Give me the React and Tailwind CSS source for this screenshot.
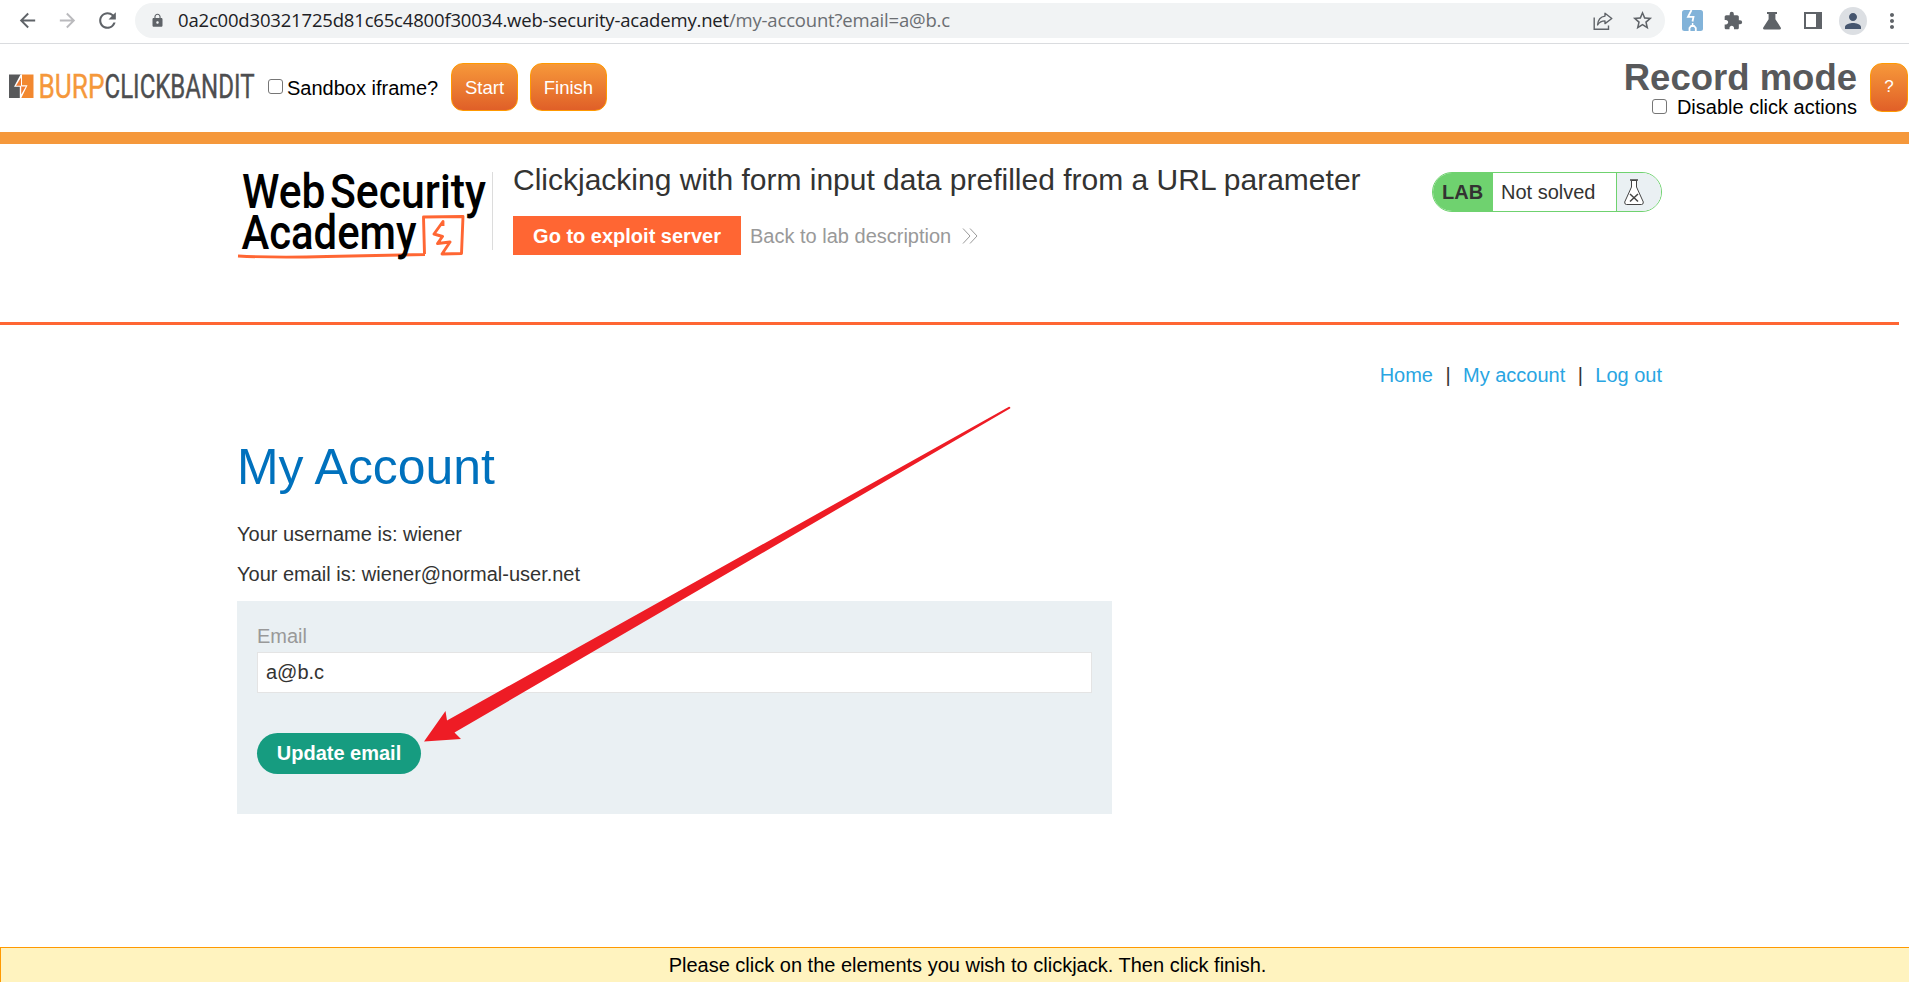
import React from "react";
import { MdArrowBack, MdArrowForward, MdRefresh, MdLock, MdStarOutline, MdExtension, MdPerson, MdMoreVert } from "react-icons/md";

function ShareIcon() {
  return (
    <svg width="20" height="20" viewBox="0 0 20 20" fill="none" stroke="#5f6368" strokeWidth="1.4" className="ml-[2px]">
      <path d="M1.2 6.5V18.3H15.5V14.5" />
      <path d="M12 2.2L18.8 7.5L12 12.6V9.9C8.5 9.9 6.3 11.2 4.6 13.9C5 9 7.6 5.6 12 5.1Z" strokeLinejoin="round" />
    </svg>
  );
}

function BurpExtensionIcon() {
  return (
    <svg width="21" height="21" viewBox="0 0 21 21">
      <rect width="21" height="21" rx="2.5" fill="#82b3d9" />
      <path d="M9.500 0L6 6.800H11.500L10.500 11.500" fill="none" stroke="#fff" strokeWidth="1.800" />
      <path d="M7.500 21V18L9.200 16H12L13.800 18V21" fill="none" stroke="#fff" strokeWidth="1.800" />
      <path d="M10.600 13V16" stroke="#fff" strokeWidth="1.500" />
    </svg>
  );
}

function FlaskIcon() {
  return (
    <svg width="18" height="18" viewBox="0 0 18 18" fill="#5f6368">
      <path d="M4 0H14V2H12.4V7.2L17.7 15.4Q18.6 17.6 16.4 17.6H1.6Q-.6 17.6 .3 15.4L5.6 7.2V2H4Z" />
    </svg>
  );
}

function BrowserBar() {
  return (
    <div className="flex h-[44px] shrink-0 items-start border-b border-[#dadcdf] bg-white">
      <div className="flex h-[40px] w-[135px] items-center pl-[17px] text-[#5f6368]">
        <MdArrowBack size={23} className="-ml-[1px] mr-[17px]" />
        <MdArrowForward size={23} className="mr-[16px] text-[#bababd]" />
        <MdRefresh size={25} />
      </div>
      <div className="mt-[3px] flex h-[35px] w-[1530px] items-center rounded-full bg-[#f1f3f4] pl-[15px] pr-[11px]">
        <MdLock size={15} className="text-[#5f6368]" />
        <div className="ml-[13px] grow whitespace-nowrap font-['Open_Sans',sans-serif] text-[18.5px] leading-none tracking-[-0.18px] text-[#202124]">
          0a2c00d30321725d81c65c4800f30034.web-security-academy.net<span className="text-[#6b6e72]">/my-account?email=a@b.c</span>
        </div>
        <ShareIcon />
        <MdStarOutline size={23} className="ml-[18px] text-[#5f6368]" />
      </div>
      <div className="flex h-[41px] items-center pl-[17px]">
        <BurpExtensionIcon />
        <MdExtension size={20} className="ml-[20px] text-[#5f6368]" />
        <div className="ml-[20px] h-[18px] w-[18px]"><FlaskIcon /></div>
        <div className="-mt-[1px] ml-[23px] h-[17px] w-[18px] border-2 border-r-[6px] border-[#5f6368]" />
        <div className="ml-[17px] flex h-[28px] w-[28px] items-center justify-center rounded-full bg-[#dcdfe3]">
          <MdPerson size={24} className="text-[#46566f]" />
        </div>
        <MdMoreVert size={24} className="ml-[13px] text-[#5f6368]" />
      </div>
    </div>
  );
}

function BanditLogo() {
  return (
    <svg width="247" height="28" viewBox="0 0 247 28" className="shrink-0 overflow-visible">
      <path d="M0 1.500H12V25H0Z" fill="#58595b" />
      <path d="M12 1.500H24.500V25H12Z" fill="#f2882f" />
      <path d="M11.500 1.500L5 13.800H10.800V25H12.300L18.500 12.200H13V1.500Z" fill="#fff" />
      <path d="M12 4.500L7 12.800H12.200V21.500L16.800 13.400H12Z" fill="#ee7a32" />
      <g fontFamily="Roboto, sans-serif" fontSize="33" strokeWidth="0.400">
        <text x="29.500" y="25" textLength="66" lengthAdjust="spacingAndGlyphs" fill="#f5983b" stroke="#f5983b">BURP</text>
        <text x="95.500" y="25" textLength="150" lengthAdjust="spacingAndGlyphs" fill="#4d4e50" stroke="#4d4e50">CLICKBANDIT</text>
      </g>
    </svg>
  );
}

function Check({ className }) {
  return <span className={"inline-block h-[15px] w-[15px] shrink-0 rounded-[3px] border border-[#767676] bg-white " + className} />;
}

function OrangeButton({ children, className }) {
  return (
    <button className={"shrink-0 rounded-[12px] border border-[#ff9900] bg-linear-to-b from-[#f6983a] to-[#e05f28] text-white " + className}>
      {children}
    </button>
  );
}

function BanditBar() {
  return (
    <div className="flex h-[100px] shrink-0 items-start border-b-[12px] border-[#f5983b] bg-white pl-[9px]">
      <div className="mt-[29px] h-[28px]"><BanditLogo /></div>
      <div className="mt-[19px] flex h-[48px] items-center">
        <Check className="ml-[12px] -mt-[2px]" />
        <span className="ml-[4px] mt-[1px] w-[153px] whitespace-nowrap text-[20px] text-black">Sandbox iframe?</span>
        <OrangeButton className="ml-[11px] h-[48px] w-[67px] pt-[2px] text-[18.5px]">Start</OrangeButton>
        <OrangeButton className="ml-[12px] h-[48px] w-[77px] pt-[2px] text-[18.5px]">Finish</OrangeButton>
      </div>
      <div className="ml-auto mr-[13px] flex flex-col items-end">
        <div className="mt-[13px] text-[36.5px] font-bold leading-[42px] text-[#58595b]">Record mode</div>
        <div className="-mt-[2px] flex items-center text-[20px] leading-[20px] text-black">
          <Check className="-mt-[2px] mr-[10px]" />
          Disable click actions
        </div>
      </div>
      <OrangeButton className="mr-[1px] mt-[19px] h-[49px] w-[38px] pb-[2px] text-[17px]">?</OrangeButton>
    </div>
  );
}

function AcademyLogo() {
  return (
    <svg width="255" height="90" viewBox="0 0 255 90" className="shrink-0 overflow-visible">
      <g fill="none" stroke="#ff6633" strokeLinejoin="round">
        <path d="M1 88Q40 90 90 88.500L188 86.500M187.500 86L186.500 49L226 48.500L224.500 85.500L205 86L213 74L200.500 75.500L205.500 68.500L197 66L206 53.500V58" strokeWidth="2.900" />
      </g>
      <g fontFamily="Roboto, sans-serif" fontSize="47.500" fontWeight="500" fill="#000">
        <text x="5" y="40" textLength="83.500" lengthAdjust="spacingAndGlyphs">Web</text>
        <text x="93" y="40" textLength="156" lengthAdjust="spacingAndGlyphs">Security</text>
        <text x="4.500" y="81" textLength="175" lengthAdjust="spacingAndGlyphs">Academy</text>
      </g>
    </svg>
  );
}

function LabFlask() {
  return (
    <svg width="20" height="26" viewBox="0 0 20 26" fill="none" stroke="#444" strokeWidth="1">
      <path d="M7.500 1.500H12.500V8L19.300 23Q19.500 25.500 17.500 25.500H2.500Q.500 25.500 .700 23L7.500 8Z" fill="#fff" />
      <path d="M6 1H14" strokeWidth="1.500" />
      <path d="M6 15L14 22.500M14 15L6 22.500" strokeWidth="1.500" />
    </svg>
  );
}

function LabHeader() {
  return (
    <header className="h-[181px] w-[1899px] shrink-0 border-b-[3px] border-[#ff6633] pl-[237px]">
      <div className="flex w-[1425px]">
        <div className="flex w-[255px] shrink-0 pt-[24px]"><AcademyLogo /></div>
        <div className="mt-[28px] h-[78px] w-px bg-[#dcdcdc]" />
        <div className="ml-[20px] flex flex-col items-start">
          <h2 className="mt-[19px] h-[34px] whitespace-nowrap text-[30px] leading-[34px] text-[#333332]">
            Clickjacking with form input data prefilled from a URL parameter
          </h2>
          <div className="mt-[19px] flex h-[39px] items-center text-[20px]">
            <button className="h-[39px] w-[228px] bg-[#ff6633] font-bold text-white">Go to exploit server</button>
            <a className="ml-[9px] whitespace-nowrap text-[#999]">Back to lab description</a>
            <svg width="16" height="16" viewBox="0 0 16 16" className="ml-[11px]" fill="none" stroke="#999" strokeWidth="1">
              <path d="M1 .500L8 8L1 15.500M8 .500L15 8L8 15.500" />
            </svg>
          </div>
        </div>
        <div className="ml-auto mt-[28px] flex h-[40px] w-[230px] overflow-hidden rounded-full border border-[#6fd26f] text-[20px] leading-[38px] text-[#333332]">
          <div className="w-[60px] bg-[#6fd26f] pl-[9px] font-bold">LAB</div>
          <div className="w-[123px] bg-white pl-[8px]">Not solved</div>
          <div className="flex grow items-start border-l border-[#6fd26f] bg-[#eaf0f3] pl-[7px] pt-[6px]"><LabFlask /></div>
        </div>
      </div>
    </header>
  );
}

function Account() {
  return (
    <main className="w-[1425px] grow ml-[237px] text-[20px] leading-[24px] text-[#333332]">
      <nav className="flex justify-end pt-[38px] text-[#29a5e2]">
        <a>Home</a>
        <span className="mx-[12px] w-[6px] text-center text-[#333332]">|</span>
        <a>My account</a>
        <span className="mx-[12px] w-[6px] text-center text-[#333332]">|</span>
        <a>Log out</a>
      </nav>
      <h1 className="mt-[50px] text-[49.9px] leading-[60px] text-[#0071bd]">My Account</h1>
      <p className="mt-[25px]">Your username is: wiener</p>
      <p className="mt-[16px]">Your email is: wiener@normal-user.net</p>
      <div className="mt-[15px] h-[213px] w-[875px] bg-[#eaf0f3] px-[20px] pt-[23px]">
        <label className="block h-[28px] text-[#999]">Email</label>
        <div className="flex h-[41px] w-[835px] items-center border border-[#e4e4e4] bg-white pb-[2px] pl-[8px]">a@b.c</div>
        <button className="mt-[40px] block h-[41px] w-[164px] rounded-full bg-[#169c80] pb-[2px] font-bold text-white">Update email</button>
      </div>
    </main>
  );
}

export default function App() {
  return (
    <div className="relative flex h-[982px] w-[1909px] flex-col overflow-hidden bg-white font-['Liberation_Sans',Arial,sans-serif]">
      <BrowserBar />
      <BanditBar />
      <LabHeader />
      <Account />
      <footer className="h-[35px] shrink-0 border-l border-t border-[#ff9900] bg-[#fff3bf] pl-[25px] text-center text-[20px] leading-[35px] text-black">
        Please click on the elements you wish to clickjack. Then click finish.
      </footer>
      <svg className="absolute left-[424px] top-[406px]" width="588" height="338" viewBox="0 0 588 338" fill="#ee1c25">
        <path d="M0 335.500L21.500 305L23 314.500L585 .800Q587 1 586 2.500L30.500 326.500L37 333Z" />
      </svg>
    </div>
  );
}
